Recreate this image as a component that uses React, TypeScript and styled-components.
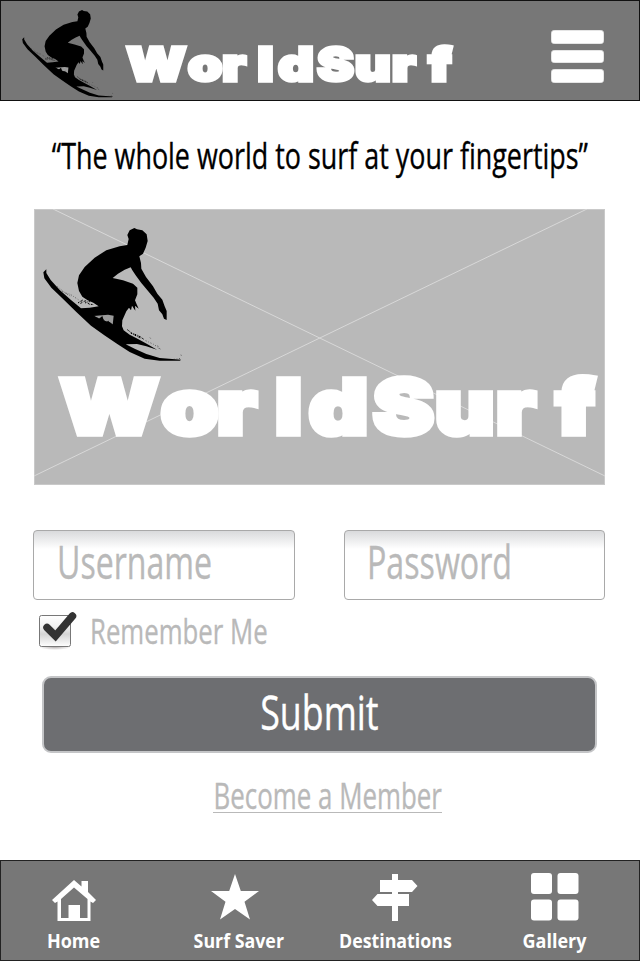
import React from "react";
import styled, { createGlobalStyle } from "styled-components";

const GlobalStyle = createGlobalStyle`
  * { box-sizing: border-box; }
  body { margin: 0; background: #fff; font-family: "Open Sans", "Noto Sans", sans-serif; }
`;

const Screen = styled.div`
  display: flex;
  flex-direction: column;
  width: 640px;
  height: 961px;
  overflow: hidden;
  background: #fff;
`;

const Header = styled.header`
  display: flex;
  align-items: flex-start;
  flex: none;
  height: 101px;
  padding: 10px 36px 0 22px;
  background: #777;
  box-shadow: inset 0 0 0 1px #111;
`;

const Surfer = styled.svg`
  display: block;
  flex: none;
`;

const Mark = styled.svg<{ $top: number; $left: number }>`
  display: block;
  flex: none;
  overflow: visible;
  margin: ${(p) => p.$top}px 0 0 ${(p) => p.$left}px;
`;

const MenuButton = styled.button`
  display: flex;
  flex-direction: column;
  gap: 6px;
  margin: 20px 0 0 auto;
  padding: 0;
  border: 0;
  background: none;
`;

const MenuBar = styled.span`
  width: 53px;
  height: 13.6px;
  border-radius: 4px;
  background: #fff;
  box-shadow: inset 0 0 0 0.5px #ccc;
`;

const Condensed = styled.span<{ $size: number; $scale: number; $origin?: string; $weight?: number }>`
  display: inline-block;
  flex: none;
  font-size: ${(p) => p.$size}px;
  font-weight: ${(p) => p.$weight ?? 400};
  line-height: 1;
  white-space: nowrap;
  -webkit-text-stroke: ${(p) => (p.$weight ? 0 : 0.35)}px currentColor;
  transform: scaleX(${(p) => p.$scale});
  transform-origin: ${(p) => p.$origin ?? "center"};
`;

const Tagline = styled.div`
  display: flex;
  justify-content: center;
  height: 108px;
  padding-top: 37px;
  color: #000;
`;

const Hero = styled.section`
  display: grid;
  flex: none;
  width: 571px;
  height: 276px;
  margin-left: 34px;
  background: #b9b9b9;
  box-shadow: inset 0 0 0 1px #c9c9c9;
  > * { grid-area: 1 / 1; }
`;

const HeroBrand = styled.div`
  display: flex;
  flex-direction: column;
  padding: 19px 0 0 9px;
`;

const Form = styled.form`
  display: flex;
  flex-direction: column;
  padding: 45px 35px 0 33px;
  color: #b9b9b9;
`;

const Fields = styled.div`
  display: flex;
  justify-content: space-between;
`;

const Field = styled.div`
  display: flex;
  width: 261.5px;
  height: 70px;
  padding: 8px 0 0 22.5px;
  border: 1px solid #a9a9a9;
  border-radius: 4px;
  background: linear-gradient(#d9dadc, #fff 18px);
`;

const Remember = styled.label`
  display: flex;
  height: 76px;
  padding: 10px 0 0 4px;
`;

const RememberText = styled.span`
  display: flex;
  padding: 3px 0 0 12px;
`;

const Submit = styled.button`
  display: flex;
  justify-content: center;
  width: 555px;
  height: 77px;
  margin-left: 9px;
  padding: 10px 0 0;
  border: 2px solid #c4c5c7;
  border-radius: 9px;
  background: #6d6e71;
  color: #fff;
  font-family: inherit;
`;

const Member = styled.a`
  display: flex;
  align-self: center;
  justify-content: center;
  width: 229px;
  height: 36px;
  margin: 24px 0 0 17px;
  padding-top: 1px;
  border-bottom: 1.5px solid #b9b9b9;
  color: #b9b9b9;
`;

const Footer = styled.nav`
  display: grid;
  grid-template-columns: 148px 182px 130px 180px;
  flex: none;
  height: 101px;
  margin-top: auto;
  background: #777;
  box-shadow: inset 0 0 0 1px #222;
  color: #fff;
`;

const NavItem = styled.a<{ $indent?: number }>`
  display: flex;
  flex-direction: column;
  align-items: center;
  gap: 7px;
  padding: 12px 0 0 ${(p) => p.$indent ?? 0}px;
`;

const NavIcon = styled.svg<{ $shift?: number }>`
  display: block;
  width: 50px;
  height: 52px;
  margin-left: ${(p) => p.$shift ?? 0}px;
  fill: #fff;
`;

function SurferArt({ width }: { width: number }) {
  return (
    <Surfer width={width} height={(width * 400) / 420} viewBox="40 83 420 400" aria-hidden>
      <path d="M314 83L322 87L338 90L351 102L354 122L348 142L340 160L329 168L334 188L335 205L349 230L370 258L383 280L398 298L405 318L411 332L411 359L403 355L398 342L388 330L384 310L372 292L352 268L335 248L318 225L308 210L303 201L285 208L265 220L249 233L280 240L310 250L323 262L323 282L316 300L321 312L327 325L316 316L317 331L307 316L304 330L298 322L290 333L278 360L277 378L282 390L300 403L325 416L351 430L382 448L350 438L322 431L288 432L315 445L350 461L390 473L455 478L450 481L390 481L345 475L300 455L264 432L224 405L184 376L140 335L101 297L65 262L44 234L41 216L50 207L50 218L63 239L91 270L123 298L154 324L180 322L207 318L191 307L174 300L158 289L148 272L143 248L148 225L165 200L195 172L230 150L270 138L293 134L297 116L293 104L300 90Z" />
      <path d="M140 322L165 328L190 343L230 341L254 333L257 350L249 378L218 361L188 344Z" />
      <path d="M192 347L235 343L252 346L249 374L230 364Z" fill="#9a9a9a" />
      <path d="M186 342L207 356L218 347L223 362L240 365L252 374L245 386L210 369Z" />
      <path d="M145 308l13-9-5 10 16-9-2 8 15-7-7 10 17 2M195 350l10 4 3 9 12-7 8 10 12-4M293 388l13 10 20 8 18 12M303 398l31 16" fill="none" stroke="#000" strokeWidth="3" strokeDasharray="5 3 2 3" />
      <path d="M83 259l24 19 15 4 24 16M98 273l28 16M348 421l24 11 17 12 7 5M331 409l9 2M361 412l3 4M384 436l6 12M453 464l5 2M432 477l23-3" fill="none" stroke="#222" strokeWidth="2" strokeDasharray="3 6 2 5" />
    </Surfer>
  );
}

/* Wordmark on a 540 x 61 canvas: widened letters, one start position for each. */
const letterStretch = 1.2;
const letterStarts = [2, 103, 159, 217, 251, 315, 377, 438, 498];

function Wordmark({ width, top, left }: { width: number; top: number; left: number }) {
  return (
    <Mark width={width} height={(width * 61) / 540} viewBox="0 0 540 61" $top={top} $left={left}>
      <text
        transform={`scale(${letterStretch} 1)`}
        x={letterStarts.map((x) => (x / letterStretch).toFixed(1)).join(" ")}
        y="58"
        fontFamily="Inter, sans-serif"
        fontWeight="900"
        fontSize="76"
        fill="#fff"
        stroke="#fff"
        strokeWidth="5.5"
      >
        WorldSurf
      </text>
    </Mark>
  );
}

export default function App() {
  return (
    <>
      <GlobalStyle />
      <Screen>
        <Header>
          <SurferArt width={92} />
          <Wordmark width={329} top={36} left={11} />
          <MenuButton aria-label="Menu">
            <MenuBar />
            <MenuBar />
            <MenuBar />
          </MenuButton>
        </Header>
        <Tagline>
          <Condensed $size={36} $scale={0.747}>“The whole world to surf at your fingertips”</Condensed>
        </Tagline>
        <Hero>
          <svg width="571" height="276" aria-hidden>
            <path d="M19 0L571 267M0 267L553 0" stroke="#d8d8d8" strokeWidth="1" />
          </svg>
          <HeroBrand>
            <SurferArt width={140} />
            <Wordmark width={540} top={15} left={15} />
          </HeroBrand>
        </Hero>
        <Form>
          <Fields>
            <Field><Condensed $size={45} $scale={0.713} $origin="left">Username</Condensed></Field>
            <Field><Condensed $size={45} $scale={0.715} $origin="left">Password</Condensed></Field>
          </Fields>
          <Remember>
            <svg width="41" height="42" aria-hidden>
              <defs>
                <linearGradient id="box" x2="0" y2="1">
                  <stop offset="0" stopColor="#fff" />
                  <stop offset=".35" stopColor="#f2f2f2" />
                  <stop offset=".6" stopColor="#d4d4d4" />
                  <stop offset="1" stopColor="#fff" />
                </linearGradient>
                <radialGradient id="shade">
                  <stop offset="0" stopColor="#b5b0b0" />
                  <stop offset="1" stopColor="#fff" />
                </radialGradient>
              </defs>
              <ellipse cx="18" cy="37" rx="16" ry="3" fill="url(#shade)" />
              <rect x="2.5" y="5.5" width="31" height="31" rx="2" fill="url(#box)" stroke="#777" />
              <path d="M10 17.5L18.500 26L35.500 6" fill="none" stroke="#333" strokeWidth="7.5" strokeLinecap="round" />
            </svg>
            <RememberText>
              <Condensed $size={35} $scale={0.736} $origin="left">Remember Me</Condensed>
            </RememberText>
          </Remember>
          <Submit type="button"><Condensed $size={48} $scale={0.745}>Submit</Condensed></Submit>
          <Member><Condensed $size={36} $scale={0.719}>Become a Member</Condensed></Member>
        </Form>
        <Footer>
          <NavItem>
            <NavIcon viewBox="0 0 50 52">
              <path d="M3 28L25 8L32.500 14.500V9H39V20L47 28L44 31L41.500 29.500V49H8.500V29.500L6 31Z" />
              <path d="M12 27L25 15.500L38.500 27V46H31V33H19.500V46H12Z" fill="#777" />
            </NavIcon>
            <Condensed $size={20} $scale={0.9} $weight={700}>Home</Condensed>
          </NavItem>
          <NavItem>
            <NavIcon viewBox="0 0 50 52" $shift={-9}>
              <path d="M25 2L30.800 19H49L34.500 29.800L40 47.500L25 37L10 47.500L15.500 29.800L1 19H19.200Z" />
            </NavIcon>
            <Condensed $size={20} $scale={0.89} $weight={700}>Surf Saver</Condensed>
          </NavItem>
          <NavItem>
            <NavIcon viewBox="0 0 50 52">
              <path d="M22 2H28V8H42L47.500 14L42 20H28V22H39V34H28V49H22V34H7.500L2 28L7.500 22H22V20H10V8H22Z" />
            </NavIcon>
            <Condensed $size={20} $scale={0.89} $weight={700}>Destinations</Condensed>
          </NavItem>
          <NavItem $indent={10}>
            <NavIcon viewBox="0 0 50 52">
              <rect x="1" y="1" width="21" height="21" rx="3" />
              <rect x="27.500" y="1" width="21" height="21" rx="3" />
              <rect x="1" y="27.500" width="21" height="21" rx="3" />
              <rect x="27.500" y="27.500" width="21" height="21" rx="3" />
            </NavIcon>
            <Condensed $size={20} $scale={0.9} $weight={700}>Gallery</Condensed>
          </NavItem>
        </Footer>
      </Screen>
    </>
  );
}
